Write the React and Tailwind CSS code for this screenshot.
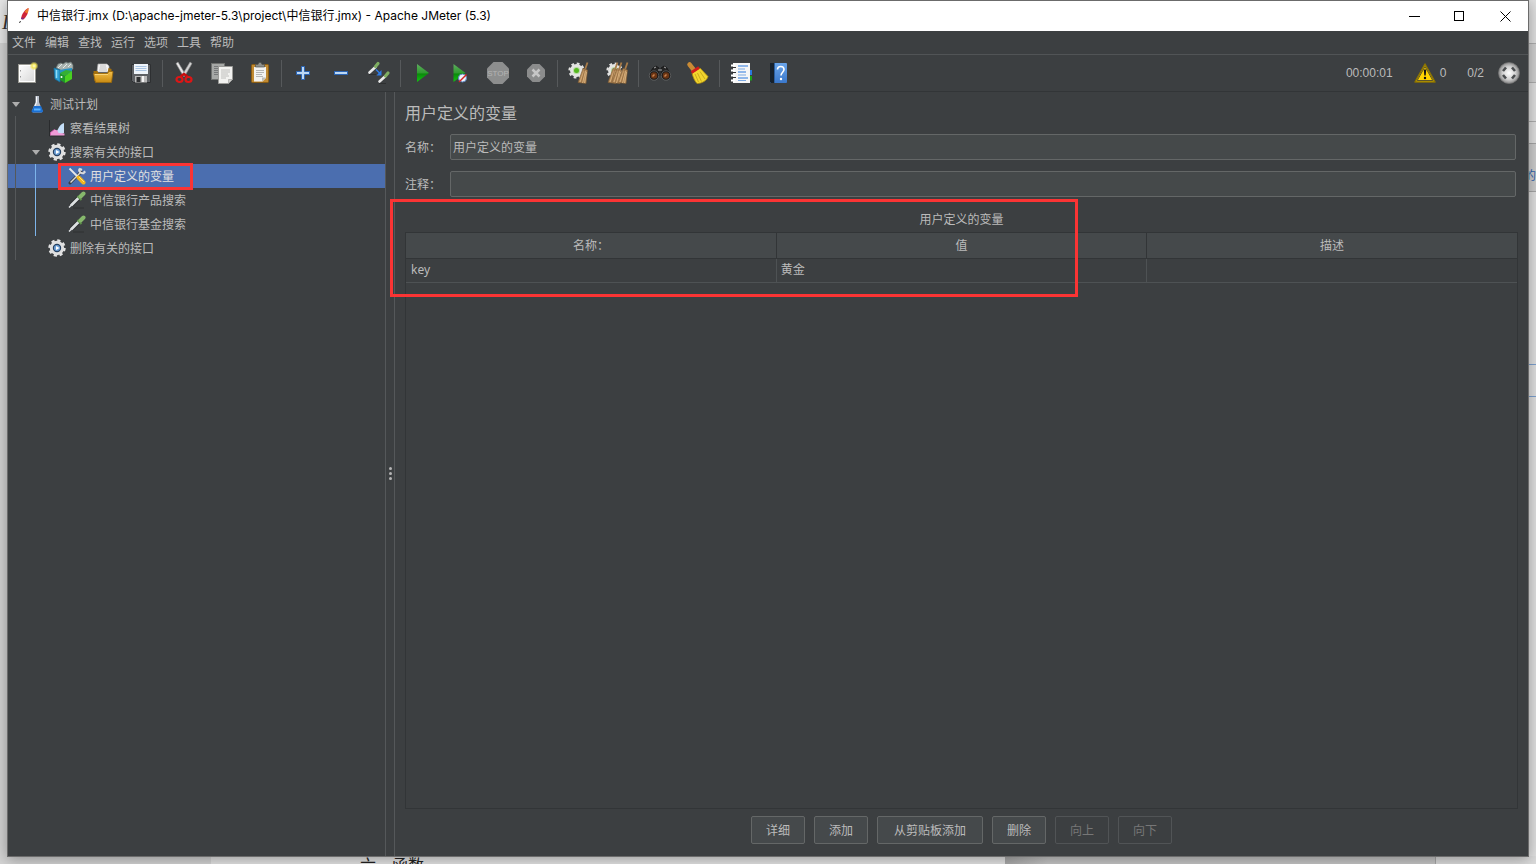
// JMeter main window - user defined variables screen
import { useState } from 'react';

/* ---------- Shared gradients ---------- */

const Gradients = () => (
    <svg className="absolute h-0 w-0" aria-hidden="true">
        <defs>
            <linearGradient id="greenFill" x1="0" y1="0" x2="0" y2="1">
                <stop offset="0" stopColor="#5fae5f" />
                <stop offset="0.5" stopColor="#2f9a2f" />
                <stop offset="0.55" stopColor="#0a8a0a" />
                <stop offset="1" stopColor="#12c412" />
            </linearGradient>
            <linearGradient id="goldFill" x1="0" y1="0" x2="0" y2="1">
                <stop offset="0" stopColor="#f3c04a" />
                <stop offset="1" stopColor="#c88a12" />
            </linearGradient>
            <linearGradient id="paperFill" x1="0" y1="0" x2="1" y2="1">
                <stop offset="0" stopColor="#ffffff" />
                <stop offset="1" stopColor="#d6d6d6" />
            </linearGradient>
            <linearGradient id="bookFill" x1="0" y1="0" x2="0" y2="1">
                <stop offset="0" stopColor="#6aa5ea" />
                <stop offset="1" stopColor="#3a78cc" />
            </linearGradient>
            <radialGradient id="orbFill">
                <stop offset="0" stopColor="#ffffff" />
                <stop offset="0.6" stopColor="#d2d2d2" />
                <stop offset="1" stopColor="#8a8a8a" />
            </radialGradient>
            <radialGradient id="glowFill">
                <stop offset="0" stopColor="#ffffd8" />
                <stop offset="0.45" stopColor="#f3e55a" />
                <stop offset="1" stopColor="#f3e55a" stopOpacity="0" />
            </radialGradient>
        </defs>
    </svg>
);

const Icon = ({ children }) => (
    <svg className="h-6 w-6 shrink-0" viewBox="0 0 24 24" fill="none" aria-hidden="true">
        {children}
    </svg>
);

/* ---------- Toolbar icons ---------- */

const NewIcon = () => (
    <Icon>
        <rect x="3.5" y="3.5" width="17" height="18" fill="url(#paperFill)" stroke="#9a9a94" />
        <rect x="4.5" y="4.5" width="15" height="16" stroke="#fff" />
        <path d="M5.5 9v1.5M5.5 15v1.5" stroke="#999" />
        <circle cx="19" cy="5" r="4.5" fill="url(#glowFill)" />
    </Icon>
);

const TemplatesIcon = () => (
    <Icon>
        <path d="M3 7l2-4 3-1 2 1 3-2 2 1 3-1 2 3v4l-8 3z" fill="#a9b3b0" stroke="#65706d" strokeWidth="0.7" />
        <path d="M5 7l4-4M10 7l4-4M15 6l3-3" stroke="#e6e9e8" />
        <path d="M1 7l6 2v12l-5-3z" fill="#2f9fd0" stroke="#1670a0" strokeWidth="0.8" />
        <path d="M3.5 9v8" stroke="#8fdcf8" strokeWidth="1.5" />
        <path d="M7 9l5-1 7-1v5l-12 4z" fill="#2592c4" />
        <path d="M7 12l5 3v7l-5-3z" fill="#1f962a" />
        <path d="M12 15l7-5v8l-7 4z" fill="#49d020" />
        <path d="M7 12l6-3 6 1-7 5z" fill="#35b032" />
        <circle cx="8.500" cy="16" r="1" fill="#fff" />
    </Icon>
);

const OpenIcon = () => (
    <Icon>
        <path d="M6 11l1-8h9l2 2v6z" fill="#f4f4f4" stroke="#aaa" strokeWidth="0.7" />
        <path d="M9 5h6M8.5 7h7M8 9h8" stroke="#b5b5b5" strokeWidth="0.8" />
        <path d="M2.5 10h4l1 2h9l1-5 3 1v12h-17z" fill="#a5700c" />
        <path d="M2.5 12.5h14l1.5-2h4l-1.5 11h-16z" fill="url(#goldFill)" stroke="#9c690b" strokeWidth="0.8" />
        <path d="M4 13.5h13" stroke="#fbdc86" strokeWidth="0.8" />
    </Icon>
);

const SaveIcon = () => (
    <Icon>
        <path d="M2.5 3.500h19v18h-17l-2-2z" fill="#5d6064" stroke="#2e3032" />
        <rect x="5" y="3" width="14" height="10" fill="#eef4fa" />
        <path d="M6.5 5.500h11M6.500 7.500h11M6.500 9.500h11" stroke="#a9c4e2" />
        <rect x="6" y="15" width="12" height="6.5" fill="#b9b9b9" />
        <rect x="7.5" y="16" width="4" height="5" fill="#2d2f31" />
        <path d="M14 15v6" stroke="#f4f4f4" strokeWidth="2" />
    </Icon>
);

const CutIcon = () => (
    <Icon>
        <path d="M4 2.500l2-1.500 7.500 12.500-2 2z" fill="#e6e6e6" stroke="#8c8c8c" strokeWidth="0.6" />
        <path d="M20 2.500l-2-1.500-7.500 12.500 2 2z" fill="#d2d2d2" stroke="#8c8c8c" strokeWidth="0.6" />
        <path d="M8.500 15.500l3.500-2.500 3.500 2.500" stroke="#c80d0d" strokeWidth="2.500" />
        <ellipse cx="7.500" cy="18.500" rx="3" ry="2.500" stroke="#dd1616" strokeWidth="2.200" />
        <ellipse cx="16.500" cy="18.500" rx="3" ry="2.500" stroke="#dd1616" strokeWidth="2.200" />
    </Icon>
);

const CopyIcon = () => (
    <Icon>
        <rect x="1.5" y="2.500" width="13" height="16" fill="#a6a8a6" stroke="#6f716f" />
        <path d="M4 5.500h8M4 7.500h8M4 9.500h4M4 11.500h4M4 13.500h4" stroke="#77797a" />
        <path d="M8.500 5.500h14v13l-4 4h-10z" fill="#f2f2f0" stroke="#9b9b98" />
        <path d="M11 9h9M11 11h9M11 13h7M11 15h8M11 17h5" stroke="#b2b2b0" strokeWidth="0.8" />
        <path d="M22.500 18.500h-4v4z" fill="#cfcfcb" stroke="#9b9b98" strokeWidth="0.6" />
    </Icon>
);

const PasteIcon = () => (
    <Icon>
        <rect x="3.5" y="3.500" width="17" height="18" rx="1" fill="#c08a32" stroke="#8a5c12" />
        <path d="M6 6h12v11l-3.500 3.500h-8.500z" fill="#f2f2f0" />
        <path d="M8 9.500h8M8 11.500h8M8 13.500h6M8 15.500h7" stroke="#a5a5a3" strokeWidth="0.8" />
        <path d="M18 16.500h-4v4z" fill="#bdbdb9" />
        <path d="M7.500 6v-2.500h2.500l1-2h2l1 2h2.500v2.500z" fill="#8d8f8c" stroke="#4f514f" strokeWidth="0.7" />
    </Icon>
);

const PlusIcon = () => (
    <Icon>
        <path d="M10.5 5.500h3v5h5v3h-5v5h-3v-5h-5v-3h5z" fill="#bcd8f5" stroke="#2a64b4" />
    </Icon>
);

const MinusIcon = () => (
    <Icon>
        <rect x="5.5" y="10.500" width="13" height="3" fill="#bcd8f5" stroke="#2a64b4" />
    </Icon>
);

const ToggleIcon = () => (
    <Icon>
        <path d="M2.500 11.500l6-5.500" stroke="#e9e9e9" strokeWidth="2.600" strokeLinecap="round" />
        <path d="M8.500 5.500l2.500-3" stroke="#7fae62" strokeWidth="3.200" strokeLinecap="round" />
        <path d="M12.500 20.500l5.500-5" stroke="#e9e9e9" strokeWidth="2.600" strokeLinecap="round" />
        <path d="M18.500 15l2.500-3" stroke="#7fae62" strokeWidth="3.200" strokeLinecap="round" />
        <path d="M2 13.500h7M12 22.500h7" stroke="#292b2c" strokeWidth="0.8" />
        <path d="M9 8.500l4 4" stroke="#2e7be6" strokeWidth="1.500" />
        <path d="M14.500 9v5.500h-5z" fill="#2e7be6" />
    </Icon>
);

const StartIcon = () => (
    <Icon>
        <path d="M7 3l12 9-12 9z" fill="url(#greenFill)" />
    </Icon>
);

const StartNoPauseIcon = () => (
    <Icon>
        <path d="M5.500 3l12 9-12 9z" fill="url(#greenFill)" />
        <circle cx="14.500" cy="17" r="4" fill="#eef3fa" stroke="#5d86c0" />
        <path d="M11 21l7.500-7.500" stroke="#d22222" strokeWidth="1.500" />
    </Icon>
);

const StopIcon = () => (
    <Icon>
        <path d="M7.500 1h9L23 7.500v9L16.500 23h-9L1 16.500v-9z" fill="#8d8e8e" />
        <text x="12" y="15" textAnchor="middle" fontFamily="Liberation Sans Narrow, Liberation Sans, sans-serif" fontSize="8" fill="#b4b4b4">
            STOP
        </text>
    </Icon>
);

const ShutdownIcon = () => (
    <Icon>
        <path d="M8.500 3h7l5.500 5.500v7L15.500 21h-7L3 15.500v-7z" fill="#8b8c8c" />
        <path d="M8.500 8.500l7 7M15.500 8.500l-7 7" stroke="#c6c6c6" strokeWidth="2.500" />
    </Icon>
);

const Broom = ({ x = 0 }) => (
    <g transform={`translate(${x} 0)`}>
        <path d="M20.500 1.500l-2.500 7" stroke="#a87b48" strokeWidth="1.800" />
        <path d="M16 7.500l4.500 1.500-1.500 13.500-8-1z" fill="#b68a58" stroke="#7c5a34" strokeWidth="0.600" />
        <path d="M17 10l-4 11M18.500 10l-3 12M19.500 11l-2 11" stroke="#e0bb8a" strokeWidth="0.700" />
        <path d="M17.500 9l-3 12.500" stroke="#8a6238" strokeWidth="0.600" />
    </g>
);

const GearShape = () => (
    <>
        <circle cx="9.500" cy="9.500" r="6.500" fill="#e4e4e2" />
        <circle cx="9.500" cy="9.500" r="7" stroke="#e4e4e2" strokeWidth="2.200" strokeDasharray="2.750 2.750" />
        <circle cx="9.500" cy="9.500" r="3.500" fill="#b9d9a2" />
    </>
);

const ClearIcon = () => (
    <Icon>
        <GearShape />
        <circle cx="9.500" cy="9.500" r="2.500" fill="#54b81e" />
        <Broom />
    </Icon>
);

const ClearAllIcon = () => (
    <Icon>
        <GearShape />
        <Broom x={-8} />
        <Broom x={-4} />
        <Broom x={2} />
    </Icon>
);

const SearchIcon = () => (
    <Icon>
        <path d="M5 7l3-2 3 2v8H2l1-5zM13 7l3-2 3 2 3 6v2h-9z" fill="#252525" stroke="#111" strokeWidth="0.700" />
        <path d="M6 7l2-1M16 6l2 1M10 9h4" stroke="#aaa" />
        <circle cx="6" cy="14.500" r="4" fill="#6b3514" stroke="#191919" strokeWidth="1.500" />
        <circle cx="18" cy="14.500" r="4" fill="#6b3514" stroke="#191919" strokeWidth="1.500" />
        <circle cx="6" cy="14.500" r="4.700" stroke="#888" strokeWidth="0.500" />
        <circle cx="18" cy="14.500" r="4.700" stroke="#888" strokeWidth="0.500" />
        <path d="M4.500 15.500l2-2M16.500 15.500l2-2" stroke="#c98350" strokeWidth="1.500" />
    </Icon>
);

const SearchResetIcon = () => (
    <Icon>
        <path d="M3.500 3.500l4 5" stroke="#c98b35" strokeWidth="4.500" strokeLinecap="round" />
        <path d="M6 12l8-5 8 8.500c-1 4-6 7-11 7-2-2-4-6-5-10.500z" fill="#f2d52e" stroke="#b2910c" strokeWidth="0.800" />
        <path d="M9 13l3.500 8M11.500 12l4 8.500M14 10.500l5 7.500" stroke="#b89a12" strokeWidth="0.700" />
        <path d="M5.500 11.500l7.500-5" stroke="#d11c1c" strokeWidth="2.800" />
    </Icon>
);

const FunctionIcon = () => (
    <Icon>
        <rect x="19" y="9" width="4" height="5" fill="#2b78dd" />
        <rect x="19" y="15" width="4" height="4.500" fill="#18a018" />
        <rect x="4" y="2" width="17" height="20" fill="#f6f6f6" />
        <path d="M9 5h10M9 11h8M9 17h10" stroke="#2b78dd" strokeWidth="1.200" />
        <path d="M9 8h7M9 14h8M9 19.500h8" stroke="#7ba9e4" />
        <path d="M2 4.500h4M2 9.500h4M2 14.500h4M2 19.500h4" stroke="#fff" strokeWidth="2" />
        <path d="M3 6.500h4M3 11.500h4M3 16.500h4" stroke="#333" />
    </Icon>
);

const HelpIcon = () => (
    <Icon>
        <rect x="3" y="2" width="17" height="20" rx="1" fill="url(#bookFill)" />
        <path d="M3 2h4v20H4l-1-1z" fill="#17212c" />
        <path d="M7.500 2v20" stroke="#2b5e9f" />
        <path d="M10.500 8.500c0-4 6.500-4 6.500 0 0 2.500-3 3-3 6" stroke="#fff" strokeWidth="1.600" />
        <circle cx="14" cy="18" r="1.200" fill="#fff" />
    </Icon>
);

const WarningIcon = () => (
    <svg className="h-[22px] w-[22px]" viewBox="0 0 22 22" fill="none" aria-hidden="true">
        <path d="M11 2L21 20H1z" fill="#ffd400" stroke="#8a7200" strokeWidth="1.500" strokeLinejoin="round" />
        <path d="M11 4.500L18.800 18.500H3.200z" stroke="#333" strokeWidth="0.800" />
        <path d="M9.800 7.500h2.400l-.5 6h-1.400z" fill="#111" />
        <circle cx="11" cy="16" r="1.200" fill="#111" />
    </svg>
);

const ThreadsIcon = () => (
    <svg className="h-[22px] w-[22px]" viewBox="0 0 22 22" fill="none" aria-hidden="true">
        <circle cx="11" cy="11" r="10.500" fill="url(#orbFill)" stroke="#777" strokeWidth="0.700" />
        <path d="M5 9l3-3.500M14 5.500l3 3.500M17 13l-3 3.500M8 16.500L5 13" stroke="#4a4d4f" strokeWidth="2.600" />
    </svg>
);

/* ---------- Tree icons ---------- */

const TreeSvg = ({ children }) => (
    <svg className="h-[18px] w-[18px] shrink-0" viewBox="0 0 18 18" fill="none" aria-hidden="true">
        {children}
    </svg>
);

const FlaskIcon = () => (
    <TreeSvg>
        <path d="M7.500 1h3.500v6l3.500 9c0 1-1 1.500-2 1.500H6c-1 0-2-.5-2-1.500L7.500 7z" fill="#b9c0cc" />
        <path d="M6 11h7l2 5c0 1-1 1.500-2 1.500H5.500c-1 0-2-.5-2-1.500z" fill="#1b6fd2" />
        <path d="M6 14.500h6.500" stroke="#58b2ff" strokeWidth="2" />
        <path d="M8.500 1.500v6L7 11" stroke="#fff" />
    </TreeSvg>
);

const ReportIcon = () => (
    <TreeSvg>
        <path d="M1.500 1v16H17" stroke="#292b2d" />
        <path d="M8 13c2-1 3-8 8-9v10c-3 2-6 1-8-1z" fill="#c5dff8" />
        <path d="M2.500 16.500v-3l4-3 3 1 1 2.500 6 .5v2z" fill="#ef9bd6" />
        <path d="M2.500 16.500v-3l4-3" stroke="#d95bb2" strokeWidth="0.800" />
    </TreeSvg>
);

const ThreadGroupIcon = () => (
    <TreeSvg>
        <circle cx="9" cy="9" r="7.500" stroke="#e4e4e4" strokeWidth="2.400" strokeDasharray="3.200 2.690" />
        <circle cx="9" cy="9" r="5.700" fill="#26405f" stroke="#e0e0e0" strokeWidth="3" />
        <circle cx="9" cy="9" r="3" fill="#6d9fd6" />
        <path d="M8 7l3.500 2L8 11z" fill="#fff" />
    </TreeSvg>
);

const ToolsIcon = () => (
    <TreeSvg>
        <path d="M2 16L13 5" stroke="#3c3c3c" strokeWidth="3" strokeLinecap="round" />
        <path d="M2.500 15.500L13 5" stroke="#d9d9d9" strokeWidth="1.500" />
        <path d="M12 1.500c-2 2 0 5.500 4.500 4.500M12 2l2 1M17 6l-1-2" stroke="#dcdcdc" strokeWidth="2" />
        <path d="M1.500 1.500L10 10" stroke="#e8e8e8" strokeWidth="1.800" />
        <path d="M10.500 10.500l5 5" stroke="#f0b51e" strokeWidth="4" strokeLinecap="round" />
        <path d="M11 10l5 5" stroke="#ffe27a" />
    </TreeSvg>
);

const SamplerIcon = () => (
    <TreeSvg>
        <path d="M3 14.500l8-8" stroke="#26282a" strokeWidth="4.500" />
        <path d="M1 16.500l2.500-2.500" stroke="#e6e8ea" strokeWidth="1.500" />
        <path d="M3 14.500l8-8" stroke="#dde0e2" strokeWidth="2.800" />
        <path d="M9.500 5l4 4" stroke="#5d8f49" strokeWidth="2.200" />
        <path d="M12.500 5.500L15.500 2.500" stroke="#86b86c" strokeWidth="4" strokeLinecap="round" />
        <path d="M5 17h11" stroke="#2b2d2f" strokeWidth="0.800" />
    </TreeSvg>
);

const FeatherIcon = () => (
    <svg className="h-4 w-4 shrink-0" viewBox="0 0 16 16" fill="none" aria-hidden="true">
        <path d="M12.500 0c-4 2-7 6-7.500 11l2.500.5C10.500 9 12.500 5 12.500 0z" fill="#cf2439" />
        <path d="M12.500 0C11 1 9.500 2.500 8.500 4l3 1.500c.7-1.500 1-3.500 1-5.500z" fill="#ec7a2c" />
        <path d="M5.500 9.500l3 .5-2 1.500-1.500-.5z" fill="#7a2f86" />
        <path d="M3.500 15l1-2" stroke="#333" />
    </svg>
);

/* ---------- Data ---------- */

const menus = ['文件', '编辑', '查找', '运行', '选项', '工具', '帮助'];

const toolGroups = [
    [
        { name: 'New', icon: NewIcon },
        { name: 'Templates', icon: TemplatesIcon },
        { name: 'Open', icon: OpenIcon },
        { name: 'Save', icon: SaveIcon },
    ],
    [
        { name: 'Cut', icon: CutIcon },
        { name: 'Copy', icon: CopyIcon },
        { name: 'Paste', icon: PasteIcon },
    ],
    [
        { name: 'Expand all', icon: PlusIcon },
        { name: 'Collapse all', icon: MinusIcon },
        { name: 'Toggle', icon: ToggleIcon },
    ],
    [
        { name: 'Start', icon: StartIcon },
        { name: 'Start no pauses', icon: StartNoPauseIcon },
        { name: 'Stop', icon: StopIcon, disabled: true },
        { name: 'Shutdown', icon: ShutdownIcon, disabled: true },
    ],
    [
        { name: 'Clear', icon: ClearIcon },
        { name: 'Clear all', icon: ClearAllIcon },
    ],
    [
        { name: 'Search', icon: SearchIcon },
        { name: 'Reset search', icon: SearchResetIcon },
    ],
    [
        { name: 'Function helper', icon: FunctionIcon },
        { name: 'Help', icon: HelpIcon },
    ],
];

const treeNodes = [
    { label: '测试计划', icon: FlaskIcon, guides: [], open: true },
    { label: '察看结果树', icon: ReportIcon, guides: ['border-[#55585a]'] },
    { label: '搜索有关的接口', icon: ThreadGroupIcon, guides: ['border-[#55585a]'], open: true },
    { label: '用户定义的变量', icon: ToolsIcon, guides: ['border-[#55585a]', 'border-[#7db4ea]'], marked: true },
    { label: '中信银行产品搜索', icon: SamplerIcon, guides: ['border-[#55585a]', 'border-[#7db4ea]'] },
    { label: '中信银行基金搜索', icon: SamplerIcon, guides: ['border-[#55585a]', 'border-[#7db4ea]'] },
    { label: '删除有关的接口', icon: ThreadGroupIcon, guides: ['border-[#55585a]'] },
];

const actions = [
    { label: '详细', padding: 'px-3.5' },
    { label: '添加', padding: 'px-3.5' },
    { label: '从剪贴板添加', padding: 'px-4' },
    { label: '删除', padding: 'px-3.5' },
    { label: '向上', padding: 'px-3.5', disabled: true },
    { label: '向下', padding: 'px-3.5', disabled: true },
];

/* ---------- Sections ---------- */

// Pieces of the document that stay visible around the window
const Desktop = () => (
    <div className="absolute inset-0 overflow-hidden bg-[#d4d4d4]" aria-hidden="true">
        <div className="absolute left-0 top-0 h-[43px] w-2 bg-[#e8e8e8]" />
        <span className="absolute left-0.5 top-2 font-['Liberation_Serif',serif] text-xl italic text-[#333]">I</span>
        <div className="absolute right-0 top-0 h-full w-2 bg-[#e2e2e2]" />
        <div className="absolute right-0 top-[43px] h-10 w-2 border-y border-[#b0b0b0] bg-[#d2d2d2]" />
        <div className="absolute right-0 top-[121px] h-[23px] w-2 border-y border-[#b0b0b0] bg-[#e2e2e2]" />
        <div className="absolute right-0 top-[143px] h-[49px] w-2 overflow-hidden border-y border-[#a8a8a8] bg-[#cfcfcf]">
            <span className="absolute -left-1 top-6 whitespace-nowrap text-xs text-[#3366b0]">的框</span>
        </div>
        <div className="absolute right-0 top-[364px] h-[33px] w-2 border-y border-[#7ea2d0]" />
        <div className="absolute bottom-0 left-[211px] right-[531px] h-2 bg-[#e4e4e4]" />
        <div className="absolute bottom-0 right-[100px] h-2 w-[431px] bg-gradient-to-r from-[#a9a9a9] via-[#c6c6c6] via-10% to-[#c6c6c6]" />
        <div className="absolute bottom-0 right-0 h-2 w-[101px] border-l border-[#a8a8a8] bg-[#dcdcdc]" />
        <div className="absolute bottom-0 left-[360px] h-2 overflow-hidden whitespace-nowrap text-base leading-5 text-[#222]">
            六、函数
        </div>
    </div>
);

const TitleBar = () => (
    <header className="flex h-[30px] shrink-0 items-center bg-white pl-2 text-black">
        <FeatherIcon />
        <h1 className="ml-[5px] flex-1 whitespace-nowrap font-['Inter','Noto_Sans_CJK_SC',sans-serif] text-xs">
            中信银行.jmx (D:\apache-jmeter-5.3\project\中信银行.jmx) - Apache JMeter (5.3)
        </h1>
        <button type="button" aria-label="Minimize" className="flex h-full w-[46px] items-center justify-center">
            <svg className="h-[11px] w-[11px]" viewBox="0 0 11 11" stroke="#000">
                <path d="M0 5.500h11" />
            </svg>
        </button>
        <button type="button" aria-label="Maximize" className="flex h-full w-[45px] items-center justify-center">
            <svg className="h-[11px] w-[11px]" viewBox="0 0 11 11" fill="none" stroke="#000">
                <rect x="0.5" y="0.500" width="9" height="9" />
            </svg>
        </button>
        <button type="button" aria-label="Close" className="flex h-full w-[46px] items-center justify-center">
            <svg className="h-[11px] w-[11px]" viewBox="0 0 11 11" stroke="#000">
                <path d="M0.500 0.500l10 10M10.500 0.500l-10 10" />
            </svg>
        </button>
    </header>
);

const Toolbar = () => (
    <div className="flex h-[37px] shrink-0 items-center border-b border-[#323537] pr-2">
        {toolGroups.map((group, i) => (
            <div key={i} className="flex items-center">
                {i > 0 && <span className="mx-0.5 h-[27px] w-px bg-[#56595b]" />}
                {group.map((tool) => (
                    <button
                        key={tool.name}
                        type="button"
                        aria-label={tool.name}
                        disabled={tool.disabled}
                        className="flex h-9 w-[38px] items-center justify-center"
                    >
                        <tool.icon />
                    </button>
                ))}
            </div>
        ))}
        <div className="ml-auto flex items-center">
            <span>00:00:01</span>
            <button type="button" className="ml-[21px] flex items-center gap-1">
                <WarningIcon />
                <span>0</span>
            </button>
            <span className="ml-[21px] mr-3.5">0/2</span>
            <ThreadsIcon />
        </div>
    </div>
);

const TestTree = ({ selected, onSelect }) => (
    <nav className="w-[378px] shrink-0 border-r border-[#55585a]">
        <ul>
            {treeNodes.map((node, i) => (
                <li key={node.label}>
                    <button
                        type="button"
                        onClick={() => onSelect(i)}
                        className={`flex h-6 w-full items-center whitespace-nowrap text-left ${
                            selected === i ? 'bg-[#4b6eaf] text-[#e0e0e0]' : ''
                        }`}
                    >
                        {node.guides.map((line, g) => (
                            <span key={g} className={`ml-[7px] h-full w-[13px] border-l ${line}`} />
                        ))}
                        <span className="w-5 pl-1">
                            {node.open && (
                                <svg className="h-[5px] w-2" viewBox="0 0 8 5" fill="#adadad">
                                    <path d="M0 0h8L4 5z" />
                                </svg>
                            )}
                        </span>
                        <span className="relative flex items-center gap-1">
                            <node.icon />
                            <span className="pt-0.5">{node.label}</span>
                            {node.marked && (
                                <span className="absolute -bottom-[5px] -left-2.5 -right-[19px] -top-1 border-3 border-[#fb3434]" />
                            )}
                        </span>
                    </button>
                </li>
            ))}
        </ul>
    </nav>
);

const Splitter = () => (
    <div className="flex w-[9px] shrink-0 flex-col items-center justify-center gap-0.5 border-r border-[#55585a] pb-0.5">
        <span className="h-[3px] w-[3px] rounded-full bg-[#b5b5b5]" />
        <span className="h-[3px] w-[3px] rounded-full bg-[#b5b5b5]" />
        <span className="h-[3px] w-[3px] rounded-full bg-[#b5b5b5]" />
    </div>
);

const Field = ({ id, label, value, onChange }) => (
    <div className="flex h-[26px] items-center pr-0.5">
        <label htmlFor={id} className="w-[45px] shrink-0 whitespace-nowrap pt-0.5">
            {label}
        </label>
        <input
            id={id}
            type="text"
            value={value}
            onChange={(e) => onChange(e.target.value)}
            className="h-full min-w-0 flex-1 rounded-xs border border-[#646767] bg-[#45494a] px-0.5 pb-0.5 outline-none"
        />
    </div>
);

const VariablesPanel = () => {
    const [name, setName] = useState('用户定义的变量');
    const [comment, setComment] = useState('');

    return (
        <main className="relative flex min-w-0 flex-1 flex-col px-2.5 pb-3">
            <h2 className="pt-0.5 text-base leading-10">用户定义的变量</h2>
            <div className="flex flex-col gap-[11px]">
                <Field id="name" label="名称：" value={name} onChange={setName} />
                <Field id="comment" label="注释：" value={comment} onChange={setComment} />
            </div>

            <h3 className="pb-0.5 pt-3.5 text-center leading-[19px]">用户定义的变量</h3>
            <div className="flex-1 border border-[#323537]">
                <table className="w-full table-fixed border-collapse">
                    <thead>
                        <tr className="h-[25px] border-b border-[#323537] bg-[#45494b]">
                            <th className="border-r border-[#323537] pt-0.5 font-normal">名称：</th>
                            <th className="border-r border-[#323537] pt-0.5 font-normal">值</th>
                            <th className="pt-0.5 font-normal">描述</th>
                        </tr>
                    </thead>
                    <tbody>
                        <tr className="h-6 border-b border-[#4e5254]">
                            <td className="border-r border-[#4e5254] px-[5px] font-['Noto_Sans',sans-serif]">key</td>
                            <td className="border-r border-[#4e5254] px-1">黄金</td>
                            <td />
                        </tr>
                    </tbody>
                </table>
            </div>

            <div className="mt-[7px] flex justify-center gap-[9px]">
                {actions.map((action) => (
                    <button
                        key={action.label}
                        type="button"
                        disabled={action.disabled}
                        className={`h-7 rounded-xs border border-[#646767] bg-[#45494b] pt-0.5 disabled:border-[#515456] disabled:bg-transparent disabled:text-[#777] ${action.padding}`}
                    >
                        {action.label}
                    </button>
                ))}
            </div>

            {/* Highlight around the variables table */}
            <div className="pointer-events-none absolute -left-[5px] top-[107px] h-[98px] w-[688px] border-3 border-[#fb3434]" />
        </main>
    );
};

const App = () => {
    const [selected, setSelected] = useState(3);

    return (
        <div className="relative flex h-screen px-[7px] pb-[7px] font-['Liberation_Sans','Noto_Sans_CJK_SC',sans-serif] text-xs text-[#bbbbbb]">
            <Desktop />
            <Gradients />
            <div className="relative flex min-w-0 flex-1 flex-col border border-[#6b6b6b] bg-[#3c3f41] shadow-[0_2px_14px_rgba(0,0,0,0.35)]">
                <TitleBar />
                <nav className="flex h-6 shrink-0 items-center gap-[9px] border-b border-[#515456] pl-1">
                    {menus.map((menu) => (
                        <button key={menu} type="button">
                            {menu}
                        </button>
                    ))}
                </nav>
                <Toolbar />
                <div className="flex min-h-0 flex-1">
                    <TestTree selected={selected} onSelect={setSelected} />
                    <Splitter />
                    <VariablesPanel />
                </div>
            </div>
        </div>
    );
};

export default App;
